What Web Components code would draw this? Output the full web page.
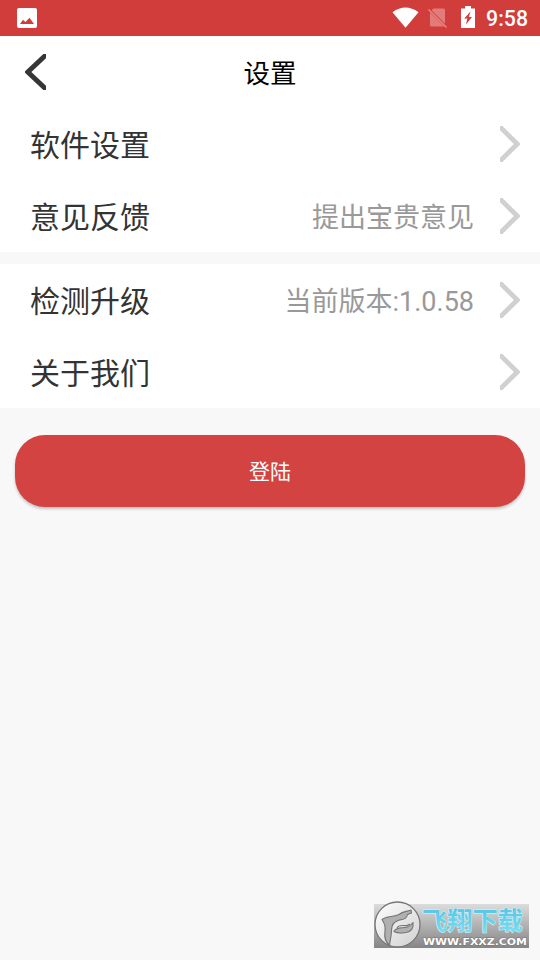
<!DOCTYPE html>
<html lang="zh-CN">
<head>
<meta charset="utf-8">
<title>设置</title>
<style>
html,body{margin:0;height:100%}
body{background:#f8f8f8;font-family:Roboto,"Noto Sans CJK SC",sans-serif;overflow:hidden}
</style>
</head>
<body>
<settings-page></settings-page>
<script>
const define = (name, html) => {
  const t = document.createElement('template');
  t.innerHTML = html;
  customElements.define(name, class extends HTMLElement {
    constructor() {
      super();
      this.attachShadow({mode: 'open'}).appendChild(t.content.cloneNode(true));
    }
  });
};

define('status-bar', `<style>
:host{display:flex;align-items:center;height:36px;background:#d13d3b;color:#fff;box-sizing:border-box;padding:0 12px 0 17px}
svg{display:block;flex:none}
.photo{margin-right:auto}
.wifi{margin-right:9px;margin-top:-2px}
.sim{margin-right:13px}
.battery{margin-right:11px;margin-top:-2px}
.time{font-size:21.300px;font-weight:500;line-height:37px;width:42px;display:flex;justify-content:flex-end;white-space:nowrap;height:36px}
</style>
<svg class="photo" width="20" height="20" viewBox="0 0 20 20"><rect width="20" height="20" rx="2" fill="#fff"/><path d="M3 16L6 11.700 8.500 14 12.500 9.700 17 16Z" fill="#d13d3b"/></svg>
<svg class="wifi" width="27" height="21" viewBox="0 0 27 21"><path d="M.5 5.200Q13.500-4 26.500 5.200L13.500 20.800Z" fill="#fff"/></svg>
<svg class="sim" width="20" height="20" viewBox="0 0 20 20"><path d="M5.500 .5H15.500Q17 .5 17 2V15.800L3.500 2.300ZM2 4.500L16 18.500H3.500Q2 18.500 2 17Z" fill="#e17c7a"/><path d="M.5 1.500L18.500 19.500" stroke="#e58a88" stroke-width="1.500"/></svg>
<svg class="battery" width="14" height="22" viewBox="0 0 14 22"><path d="M4 0H10V2.500H14V22H0V2.500H4Z" fill="#fff"/><path d="M9.500 5.500L3.200 12.500H6.300L5 18.500 11 11H7.800Z" fill="#d13d3b"/></svg>
<span class="time"><slot></slot></span>`);

define('title-bar', `<style>
:host{display:grid;grid-template-columns:72px 1fr 72px;align-items:center;height:72px;background:#fff;color:#000}
svg{display:block;margin:0 0 2px 25px}
h1{margin:0;text-align:center;font-size:26.500px;font-weight:400;line-height:72px;padding-top:2px}
</style>
<svg width="21" height="36" viewBox="0 0 21 36"><path d="M22 0L2.800 18 22 36" fill="none" stroke="#363636" stroke-width="5"/></svg>
<h1><slot></slot></h1>`);

define('setting-row', `<style>
:host{display:flex;align-items:center;height:72px;box-sizing:border-box;padding:0 20px 0 30px;color:#333}
.label{flex:1;font-size:30px;line-height:72px;padding-top:3px}
.value{font-size:27px;line-height:72px;color:#999;margin-right:26px;white-space:nowrap;padding-top:3px}
svg{display:block;flex:none}
</style>
<span class="label"><slot></slot></span><span class="value"><slot name="value"></slot></span>
<svg width="20" height="36" viewBox="0 0 20 36"><path d="M-1 0L17.300 18-1 36" fill="none" stroke="#d0d0d0" stroke-width="4.800"/></svg>`);

define('setting-group', `<style>:host{display:flex;flex-direction:column;background:#fff}</style><slot></slot>`);

define('login-button', `<style>
:host{display:block;margin:15px 15px 0}
button{display:block;width:100%;height:72px;border:0;border-radius:30px;padding:0;background:#d34341;color:#fff;font:400 21px/74px Roboto,"Noto Sans CJK SC",sans-serif;box-shadow:0 2px 3px rgba(0,0,0,.22)}
</style><button><slot></slot></button>`);

define('site-mark', `<style>
:host{display:block;width:155px;height:44px;background:linear-gradient(#dcdcdc,#858585)}
svg{display:block;overflow:visible}
.name{font:700 25px "Noto Sans CJK SC",sans-serif}
.url{font:700 9.500px "DejaVu Sans",sans-serif}
</style>
<svg width="155" height="44" viewBox="0 0 155 44">
<defs>
<linearGradient id="disc" x1="0" y1="0" x2="1" y2="1"><stop stop-color="#fff"/><stop offset="1" stop-color="#d0d0d0"/></linearGradient>
<linearGradient id="blue" x1="0" y1="0" x2="0" y2="1"><stop stop-color="#4dbde0"/><stop offset="1" stop-color="#7de2f5"/></linearGradient>
</defs>
<circle cx="23.500" cy="20.500" r="22.500" fill="url(#disc)" stroke="#777" stroke-width="1.300"/>
<g fill="#b0b0b0" stroke="#747474" stroke-width="1.100" stroke-linejoin="round">
<path d="M8 15.500C12 12 20 13 25 10.500 29 7.500 31 8 37 6L37.500 9 33.500 10.500C32.500 16 28 15 23 17 16 20 18 27 17 32L15.500 41C11 38 10 34 11 27 12 21 10 19 8 15.500Z"/>
<path d="M20 27C23 23 27 24 31 23.500 35 23 37 21 39 18.500 40 24 37 28 32 28.500 28 29 24 30 20 27.500Z"/>
<path d="M23 24C25 20 29 22 33 21.500L36 20" fill="none"/>
</g>
<text class="name" x="48" y="25.500" textLength="101" lengthAdjust="spacingAndGlyphs" fill="url(#blue)" stroke="#d9f3fa" stroke-width="1" paint-order="stroke">飞翔下载</text>
<text class="url" x="49" y="40.800" textLength="104" lengthAdjust="spacingAndGlyphs" fill="#fff" stroke="#777" stroke-width="1" paint-order="stroke">WWW.FXXZ.COM</text>
</svg>`);

define('settings-page', `<style>
:host{display:flex;flex-direction:column;height:960px;box-sizing:border-box;background:#f8f8f8;padding-bottom:12px}
main{display:flex;flex-direction:column;gap:12px}
site-mark{margin:auto 11px 0 auto}
</style>
<status-bar>9:58</status-bar>
<title-bar>设置</title-bar>
<main>
<setting-group>
<setting-row>软件设置</setting-row>
<setting-row>意见反馈<span slot="value">提出宝贵意见</span></setting-row>
</setting-group>
<setting-group>
<setting-row>检测升级<span slot="value">当前版本:1.0.58</span></setting-row>
<setting-row>关于我们</setting-row>
</setting-group>
<login-button>登陆</login-button>
</main>
<site-mark></site-mark>`);
</script>
</body>
</html>
